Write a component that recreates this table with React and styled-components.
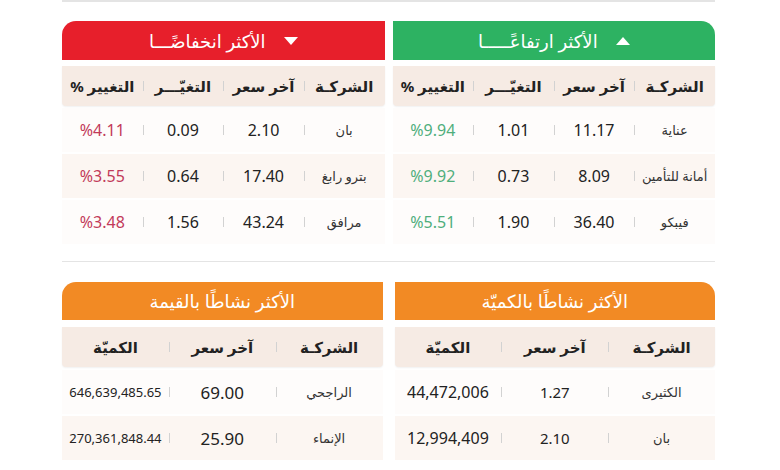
import styled, { createGlobalStyle } from "styled-components";

const Global = createGlobalStyle`
  body {
    margin: 0;
    background: #ffffff;
    font-family: "Noto Sans", "DejaVu Sans", sans-serif;
  }
`;

const Page = styled.div`
  width: 780px;
  height: 470px;
  overflow: hidden;
  box-sizing: border-box;
  padding: 0 65px 0 62px;
  direction: rtl;
`;

const Rule = styled.div`
  height: ${(p) => p.$h || 1}px;
  background: #e4e4e4;
  margin-top: ${(p) => p.$top || 0}px;
`;

const Section = styled.div`
  display: grid;
  grid-template-columns: 1fr 1fr;
  column-gap: ${(p) => p.$gap}px;
  margin-top: ${(p) => p.$top}px;
`;

const Card = styled.div`
  display: flex;
  flex-direction: column;
`;

const Title = styled.div`
  height: ${(p) => p.$h}px;
  background: ${(p) => p.$color};
  color: #ffffff;
  display: flex;
  align-items: center;
  justify-content: center;
  gap: 18px;
  font-size: 18px;
  font-weight: 500;
  border-radius: ${(p) => (p.$side === "right" ? "0 14px 0 0" : "14px 0 0 0")};
`;

const Arrow = styled.span`
  width: 0;
  height: 0;
  border-left: 7px solid transparent;
  border-right: 7px solid transparent;
  border-bottom: ${(p) => (p.$up ? "8px solid #fff" : "none")};
  border-top: ${(p) => (p.$up ? "none" : "8px solid #fff")};
`;

const HeadRow = styled.div`
  display: grid;
  grid-template-columns: repeat(${(p) => p.$cols}, 1fr);
  align-items: center;
  height: 40px;
  margin-top: ${(p) => p.$top}px;
  background: #f6ebe4;
  border-radius: 0 0 4px 4px;
  box-shadow: 0 1px 2px rgba(0, 0, 0, 0.06);
`;

const Row = styled.div`
  display: grid;
  grid-template-columns: repeat(${(p) => p.$cols}, 1fr);
  align-items: center;
  height: 44px;
  margin-top: ${(p) => p.$top}px;
  background: ${(p) => (p.$alt ? "#fcf6f2" : "#fefcfb")};
`;

const Cell = styled.div`
  position: relative;
  text-align: center;
  white-space: nowrap;
  font-size: ${(p) => p.$size || 15}px;
  font-weight: 400;
  color: ${(p) => p.$color || "#222"};

  &:not(:last-child)::after {
    content: "";
    position: absolute;
    left: 0;
    top: 50%;
    width: 1px;
    height: 10px;
    background: #d2d2d2;
    transform: translateY(-50%);
  }
`;

const HeadCell = styled(Cell)`
  font-size: 15px;
  font-weight: 700;
  color: #222;
`;

const movers = [
  {
    side: "right",
    color: "#2db262",
    up: true,
    title: "الأكثر ارتفاعًـــــا",
    pct: "#4fae7c",
    rows: [
      ["عناية", "11.17", "1.01", "%9.94"],
      ["أمانة للتأمين", "8.09", "0.73", "%9.92"],
      ["فيبكو", "36.40", "1.90", "%5.51"],
    ],
  },
  {
    side: "left",
    color: "#e71f2b",
    up: false,
    title: "الأكثر انخفاضًـــا",
    pct: "#c23a5a",
    rows: [
      ["بان", "2.10", "0.09", "%4.11"],
      ["بترو رابغ", "17.40", "0.64", "%3.55"],
      ["مرافق", "43.24", "1.56", "%3.48"],
    ],
  },
];

const active = [
  {
    side: "right",
    title: "الأكثر نشاطًا بالكميّة",
    priceSize: 15,
    qtySize: 16,
    rows: [
      ["الكثيرى", "1.27", "44,472,006"],
      ["بان", "2.10", "12,994,409"],
    ],
  },
  {
    side: "left",
    title: "الأكثر نشاطًا بالقيمة",
    priceSize: 17,
    qtySize: 13,
    rows: [
      ["الراجحي", "69.00", "646,639,485.65"],
      ["الإنماء", "25.90", "270,361,848.44"],
    ],
  },
];

const App = () => {
  return (
    <>
      <Global />
      <Page>
        <Rule $h={2} />
        <Section $gap={8} $top={19}>
          {movers.map((t) => (
            <Card key={t.side}>
              <Title $h={39} $color={t.color} $side={t.side}>
                <Arrow $up={t.up} />
                {t.title}
              </Title>
              <HeadRow $cols={4} $top={6}>
                <HeadCell>الشركـة</HeadCell>
                <HeadCell>آخر سعر</HeadCell>
                <HeadCell>التغيّـــر</HeadCell>
                <HeadCell>التغيير %</HeadCell>
              </HeadRow>
              {t.rows.map((r, i) => (
                <Row key={r[0]} $cols={4} $top={2} $alt={i % 2 === 1}>
                  <Cell $size={13} $color="#333">
                    {r[0]}
                  </Cell>
                  <Cell $size={16}>{r[1]}</Cell>
                  <Cell $size={16}>{r[2]}</Cell>
                  <Cell $size={16} $color={t.pct}>
                    {r[3]}
                  </Cell>
                </Row>
              ))}
            </Card>
          ))}
        </Section>

        <Rule $top={17} />

        <Section $gap={12} $top={20}>
          {active.map((t) => (
            <Card key={t.side}>
              <Title $h={38} $color="#f28a24" $side={t.side}>
                {t.title}
              </Title>
              <HeadRow $cols={3} $top={7}>
                <HeadCell>الشركـة</HeadCell>
                <HeadCell>آخر سعر</HeadCell>
                <HeadCell>الكميّة</HeadCell>
              </HeadRow>
              {t.rows.map((r, i) => (
                <Row key={r[0]} $cols={3} $top={i === 0 ? 3 : 2} $alt={i % 2 === 1}>
                  <Cell $size={13} $color="#333">
                    {r[0]}
                  </Cell>
                  <Cell $size={t.priceSize}>{r[1]}</Cell>
                  <Cell $size={t.qtySize}>{r[2]}</Cell>
                </Row>
              ))}
            </Card>
          ))}
        </Section>
      </Page>
    </>
  );
};

export default App;
